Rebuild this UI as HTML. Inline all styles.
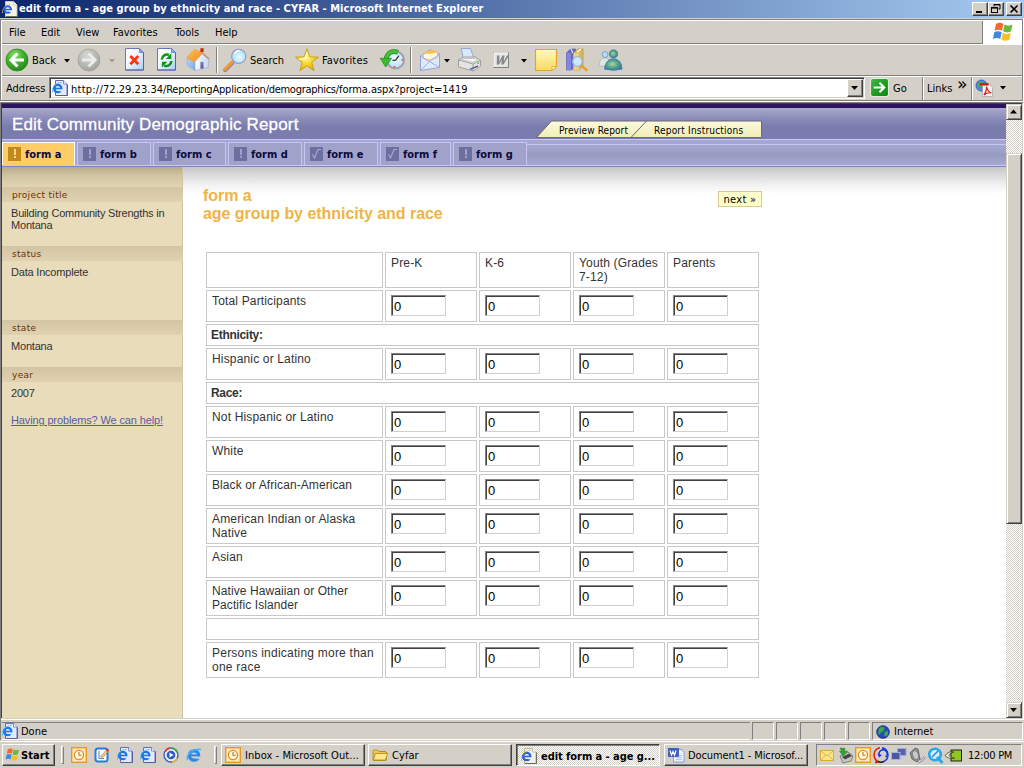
<!DOCTYPE html>
<html>
<head>
<meta charset="utf-8">
<title>edit form a - age group by ethnicity and race - CYFAR</title>
<style>
*{box-sizing:border-box;margin:0;padding:0}
html,body{width:1024px;height:768px;overflow:hidden;background:#d4d0c8}
body{position:relative;font-family:"DejaVu Sans Condensed","DejaVu Sans","Liberation Sans",sans-serif;font-size:11px;color:#000}
.abs{position:absolute}
.ui{position:absolute;white-space:nowrap;line-height:13px;font-size:11px}
/* title bar */
#title{left:0;top:0;width:1024px;height:18px;background:linear-gradient(90deg,#0a246a,#a6caf0)}
#title .t{left:19px;top:2px;color:#fff;font-weight:bold;font-size:11px;line-height:14px;letter-spacing:.05px}
.wb{position:absolute;top:2px;width:16px;height:14px;background:#d4d0c8;border:1px solid;border-color:#fff #404040 #404040 #fff;box-shadow:inset -1px -1px 0 #808080}
/* chrome lines */
.hl{position:absolute;height:1px;left:0;width:1024px}
.vl{position:absolute;width:1px}
/* page */
#page{left:2px;top:104px;width:1004px;height:614px;background:#fff;overflow:hidden}
#hdr{left:0;top:4px;width:1004px;height:31px;background:linear-gradient(180deg,#a9aacb 0%,#8e90bb 30%,#797cad 60%,#797cad 100%)}
#hdr .h{left:10px;top:7px;letter-spacing:.15px;-webkit-text-stroke:.3px #fff;font-family:"Liberation Sans",sans-serif;font-size:17px;line-height:20px;color:#fff;white-space:nowrap}
#tabs{left:0;top:35px;width:1004px;height:28px;background:#a5a6d2;border-top:1px solid #c8c8fa;border-bottom:1px solid #8283ba;box-shadow:inset 0 -1px 0 #c8c8fa}
.tab{position:absolute;top:2px;height:23px;border:1px solid #c6c6f6;border-bottom:none;background:#a0a2c9;font-weight:bold;font-size:11px;color:#0a0a3c;line-height:13px;white-space:nowrap}
.tab.on{background:#ffcc66;border-color:#fff}
.tab i{position:absolute;left:5px;top:4px;width:13px;height:14px;background:#6d709f}.tab i u{position:absolute;left:6px;top:2px;width:2px;height:6px;background:#a09fd0}.tab i s{position:absolute;left:6px;top:9px;width:2px;height:2px;background:#a09fd0}.tab.on i u,.tab.on i s{background:#ffd680}.tab i svg{position:absolute;left:0;top:0;stroke:#a8a8dc}
.tab.on i{background:#c28a1e}
.tab span{position:absolute;left:22px;top:5px}
#side{left:0;top:63px;width:181px;height:551px;background:#e9dcbb}
.sl{position:absolute;left:0;width:181px;height:15px;background:linear-gradient(180deg,#d3c5a3,#e0d2b0);color:#6e3302;font-family:"DejaVu Sans","Liberation Sans",sans-serif;font-size:9px;letter-spacing:.3px;line-height:13px;padding:2px 0 0 10px;white-space:nowrap}
.sv{position:absolute;left:9px;font-family:"Liberation Sans",sans-serif;font-size:11px;line-height:12px;color:#333;white-space:nowrap;letter-spacing:-.2px}
#main{left:181px;top:63px;width:823px;height:551px;background:#fff}
table.g{position:absolute;left:21px;top:83px;border-collapse:separate;border-spacing:2px;font-family:"Liberation Sans",sans-serif;font-size:12px;color:#333;table-layout:fixed}
table.g td{border:1px solid #c8c8c8;vertical-align:top;padding:3px 0 0 5px;line-height:14px;overflow:hidden;letter-spacing:.16px;white-space:nowrap}table.g td.sec{padding-left:4px}table.g td.sec b{letter-spacing:-.3px}table.g td.ic{padding-top:4px;letter-spacing:0}
.in{display:block;width:55px;height:21px;border:1px solid;border-color:#848284 #d4d0c8 #d4d0c8 #848284;box-shadow:inset 1px 1px 0 #424142;padding:2px 0 0 2px!important;background:#fff;font-size:13px;line-height:17px;color:#000;padding:1px 0 0 1px;margin:0}
/* taskbar */
.tbtn{position:absolute;top:744px;height:22px;background:#d4d0c8;border:1px solid;border-color:#fff #404040 #404040 #fff;box-shadow:inset -1px -1px 0 #808080;font-size:11px;line-height:13px;white-space:nowrap;overflow:hidden}
.sbb{width:16px;height:16px;background:#d4d0c8;border:1px solid;border-color:#d4d0c8 #404040 #404040 #d4d0c8;box-shadow:inset 1px 1px 0 #fff,inset -1px -1px 0 #808080}
.sp{position:absolute;top:722px;height:18px;border:1px solid;border-color:#808080 #fff #fff #808080}
.grip{position:absolute;top:746px;width:3px;height:18px;border:1px solid;border-color:#fff #808080 #808080 #fff}
.tbtn.dn{border-color:#404040 #fff #fff #404040;box-shadow:inset 1px 1px 0 #808080;background:#eae8e3;background-image:conic-gradient(#fff 25%,#d4d0c8 0 50%,#fff 0 75%,#d4d0c8 0);background-size:2px 2px}
</style>
</head>
<body>
<!-- TITLE BAR -->
<div id="title" class="abs">
 <svg class="abs" style="left:2px;top:1px" width="17" height="16" viewBox="0 0 17 16"><path d="M3.500 .500h8l3.500 3.500v11.500h-11.500z" fill="#f3f2e6" stroke="#c8c4b0" stroke-width="1"/><path d="M11.500 .500v3.500h3.500" fill="#fff" stroke="#c8c4b0" stroke-width=".8"/><path d="M15.500 4.500v11h-11.500" fill="none" stroke="#6e6a5c" stroke-width="1"/><circle cx="5.700" cy="8.500" r="3.300" fill="none" stroke="#2a62e0" stroke-width="2"/><rect x="2.800" y="7.800" width="6.400" height="1.500" fill="#2a62e0"/><rect x="7" y="9.300" width="3.500" height="1.700" fill="#f3f2e6"/><path d="M.500 12C0 7 4 3.500 8.500 3" fill="none" stroke="#d8b848" stroke-width="1" stroke-dasharray="1.500 .8"/></svg>
 <div class="ui t">edit form a - age group by ethnicity and race - CYFAR - Microsoft Internet Explorer</div>
 <div class="wb" style="left:972px"><svg class="abs" style="left:0;top:0" width="14" height="12"><rect x="3" y="8" width="6" height="2" fill="#000"/></svg></div>
 <div class="wb" style="left:988px"><svg class="abs" style="left:0;top:0" width="14" height="12"><path d="M5 1.5h6v4.5h-1.5M5 1.5v2" fill="none" stroke="#000"/><rect x="5" y="1" width="6" height="1.4" fill="#000"/><rect x="2.5" y="4.5" width="6" height="5" fill="#d4d0c8" stroke="#000"/><rect x="2" y="4" width="7" height="1.6" fill="#000"/></svg></div>
 <div class="wb" style="left:1006px"><svg class="abs" style="left:0;top:0" width="14" height="12"><path d="M3.5 2.5l7 7M10.5 2.5l-7 7" stroke="#000" stroke-width="1.7" fill="none"/></svg></div>
</div>
<!-- chrome lines -->
<div class="hl" style="top:19px;left:0;width:1023px;background:#808080"></div>
<div class="hl" style="top:20px;left:1px;width:1021px;background:#fff"></div>
<div class="vl" style="left:0;top:19px;height:722px;background:#808080"></div>
<div class="vl" style="left:1px;top:20px;height:80px;background:#fff"></div>
<div class="vl" style="left:1022px;top:19px;height:82px;background:#808080"></div>
<div class="vl" style="left:1023px;top:18px;height:702px;background:#fff"></div>
<div class="hl" style="top:43px;left:2px;width:980px;background:#808080"></div>
<div class="hl" style="top:44px;left:2px;width:1020px;background:#fff"></div>
<div class="hl" style="top:75px;left:2px;width:1020px;background:#808080"></div>
<div class="hl" style="top:76px;left:2px;width:1020px;background:#fff"></div>
<div class="hl" style="top:100px;left:0;width:1023px;background:#808080"></div>
<div class="hl" style="top:101px;left:0;width:1024px;background:#fff"></div>
<div class="hl" style="top:102px;left:0;width:1023px;background:#808080"></div>
<div class="hl" style="top:103px;left:1px;width:1021px;background:#404040"></div>
<div class="vl" style="left:1px;top:103px;height:615px;background:#404040"></div>
<div class="vl" style="left:1022px;top:103px;height:616px;background:#d4d0c8"></div>
<!-- MENU -->
<div class="ui" style="left:9px;top:26px">File</div>
<div class="ui" style="left:41px;top:26px">Edit</div>
<div class="ui" style="left:76px;top:26px">View</div>
<div class="ui" style="left:113px;top:26px">Favorites</div>
<div class="ui" style="left:175px;top:26px">Tools</div>
<div class="ui" style="left:215px;top:26px">Help</div>
<!-- windows flag -->
<div class="abs" style="left:983px;top:21px;width:39px;height:23px;background:#fff"></div>
<div class="vl" style="left:982px;top:21px;height:23px;background:#808080"></div>
<svg class="abs" style="left:992px;top:21px" width="25" height="23" viewBox="0 0 22 20"><path d="M3.5 2.5q3.5-2 6.5 0l-1.2 6q-3-2-6.5 0z" fill="#f26a2a"/><path d="M11 3q3.5 2 7 0l-1.2 6q-3.5 2-7 0z" fill="#6cb83a"/><path d="M2 9.8q3.500-2 6.500 0l-1.200 6q-3-2-6.500 0z" fill="#3f8ae0"/><path d="M9.500 10.300q3.500 2 7 0l-1.200 6q-3.500 2-7 0z" fill="#f6c020"/></svg>
<!-- TOOLBAR -->
<svg class="abs" style="left:4px;top:47px" width="630" height="26" viewBox="4 47 630 26">
<defs>
<radialGradient id="gG" cx=".4" cy=".3" r=".8"><stop offset="0" stop-color="#8fe070"/><stop offset=".5" stop-color="#3db02a"/><stop offset="1" stop-color="#1e7a18"/></radialGradient>
<radialGradient id="gS" cx=".4" cy=".3" r=".8"><stop offset="0" stop-color="#d8d8d4"/><stop offset=".6" stop-color="#b4b4b0"/><stop offset="1" stop-color="#9a9a96"/></radialGradient>
<linearGradient id="pg" x1="0" y1="0" x2="1" y2="1"><stop offset="0" stop-color="#fff"/><stop offset=".45" stop-color="#f0f6ff"/><stop offset="1" stop-color="#a4ccf8"/></linearGradient>
<radialGradient id="lens" cx=".55" cy=".55" r=".6"><stop offset="0" stop-color="#e8fbff"/><stop offset=".6" stop-color="#c0e8fc"/><stop offset="1" stop-color="#a4d0f4"/></radialGradient>
<radialGradient id="star" cx=".45" cy=".4" r=".6"><stop offset="0" stop-color="#fff8a0"/><stop offset=".5" stop-color="#f8d830"/><stop offset="1" stop-color="#e0a808"/></radialGradient>
<radialGradient id="msn" cx=".45" cy=".45" r=".65"><stop offset="0" stop-color="#a8d8a0"/><stop offset=".55" stop-color="#4f9c84"/><stop offset="1" stop-color="#2f74a8"/></radialGradient><linearGradient id="hwl" x1="0" y1="0" x2="1" y2="1"><stop offset="0" stop-color="#b4d8fa"/><stop offset="1" stop-color="#78a8e4"/></linearGradient><linearGradient id="hwf" x1="0" y1="0" x2="1" y2="0"><stop offset="0" stop-color="#ffffff"/><stop offset="1" stop-color="#c4d4f4"/></linearGradient><linearGradient id="hrf" x1="0" y1="0" x2="1" y2="1"><stop offset="0" stop-color="#ffc050"/><stop offset="1" stop-color="#f08c20"/></linearGradient><linearGradient id="hdr" x1="0" y1="0" x2="0" y2="1"><stop offset="0" stop-color="#8080c0"/><stop offset="1" stop-color="#585898"/></linearGradient><radialGradient id="clk" cx=".5" cy=".4" r=".7"><stop offset="0" stop-color="#f0fbff"/><stop offset="1" stop-color="#acd8f4"/></radialGradient><linearGradient id="note" x1="0" y1="0" x2="0" y2="1"><stop offset="0" stop-color="#fffbc0"/><stop offset="1" stop-color="#f8d860"/></linearGradient>
</defs>
<!-- back -->
<circle cx="17" cy="60" r="11" fill="url(#gG)" stroke="#2a8a20" stroke-width=".8"/>
<path d="M17.500 53.500l-6.500 6.500 6.500 6.500M11.500 60h12.500" fill="none" stroke="#fff" stroke-width="3"/>
<path d="M64 59h6l-3 3.500z" fill="#000"/>
<!-- forward -->
<circle cx="89" cy="60" r="11" fill="url(#gS)" stroke="#a0a09c" stroke-width=".8"/>
<path d="M88.500 53.500l6.500 6.500-6.500 6.500M94.500 60h-12.500" fill="none" stroke="#ecece8" stroke-width="3"/>
<path d="M109 59h6l-3 3.500z" fill="#a09c94"/>
<!-- stop -->
<path d="M125.500 48.500h14l4 4v17.500h-18z" fill="url(#pg)" stroke="#6878c0"/>
<path d="M143.500 52.500v17.500h-18" fill="none" stroke="#5560a4"/>
<path d="M139.500 48.500v4h4z" fill="#6ab4f8" stroke="#6878c0" stroke-width=".8"/>
<path d="M130.300 56l8 8.300M138.300 56l-8 8.300" stroke="#ff3408" stroke-width="2.800"/>
<!-- refresh -->
<path d="M157.500 48.500h14l4 4v17.500h-18z" fill="url(#pg)" stroke="#6878c0"/>
<path d="M175.500 52.500v17.500h-18" fill="none" stroke="#5560a4"/>
<path d="M171.500 48.500v4h4z" fill="#6ab4f8" stroke="#6878c0" stroke-width=".8"/>
<path d="M161.800 59.600A5.200 5.200 0 0 1 169 55" fill="none" stroke="#109414" stroke-width="2.500"/><path d="M171.300 53.200v5.700h-5.400z" fill="#109414"/>
<path d="M171.400 61A5.200 5.200 0 0 1 164.200 65.600" fill="none" stroke="#109414" stroke-width="2.500"/><path d="M161.900 67.400v-5.700h5.400z" fill="#109414"/>
<!-- home -->
<path d="M187 58v7.300l8.100 5.200v-9z" fill="url(#hwl)" stroke="#7aa0d8" stroke-width=".5"/>
<path d="M195.100 61.500l7.100-7.800 6.600 5.400-.3 8.100-13.400 3.300z" fill="url(#hwf)" stroke="#9aa4d4" stroke-width=".6"/>
<path d="M186.600 57.600l7.900-8.400 8.300 3.200-8.600 9.600z" fill="url(#hrf)" stroke="#f0a030" stroke-width=".5"/>
<path d="M202.200 53l6.900 6" stroke="#c88868" stroke-width="1.100" fill="none"/>
<rect x="200.400" y="48.200" width="3.200" height="3.900" fill="#c03010"/>
<rect x="200.400" y="61.800" width="3.200" height="6.800" fill="url(#hdr)"/>
<!-- sep -->
<rect x="216" y="47" width="1" height="26" fill="#808080"/><rect x="217" y="47" width="1" height="26" fill="#fff"/>
<!-- search -->
<path d="M225.200 70.200l7.200-7.400" stroke="#8a86b4" stroke-width="4" stroke-linecap="round"/>
<path d="M225 69.400l7.200-7.400" stroke="#f0982c" stroke-width="3" stroke-linecap="round"/>
<circle cx="238.700" cy="56.300" r="7.100" fill="url(#lens)" stroke="#8f92d2" stroke-width="1.100"/>
<path d="M234.500 53.500q1.500-2.500 4.500-3" stroke="#fff" stroke-width="1.300" fill="none" stroke-linecap="round"/>
<!-- star -->
<path d="M307.00 48.70 L309.94 56.85 L318.60 57.13 L311.76 62.45 L314.17 70.77 L307.00 65.90 L299.83 70.77 L302.24 62.45 L295.40 57.13 L304.06 56.85z" fill="url(#star)" stroke="#c8a010" stroke-width=".9" stroke-linejoin="round"/>
<path d="M307 52.500l-1.800 6-5.500 .8" fill="none" stroke="#fffbd0" stroke-width="1.200" stroke-linecap="round"/>
<!-- history -->
<circle cx="395.500" cy="60" r="8.600" fill="url(#clk)" stroke="#9c9cb0" stroke-width="2"/>
<circle cx="395.500" cy="60" r="9.700" fill="none" stroke="#c4c4d0" stroke-width=".7"/>
<path d="M395.500 60.300l3.400-4.600M395.500 60.300h-3" stroke="#303040" stroke-width="1.300"/>
<circle cx="402.300" cy="59.800" r=".9" fill="#e84020"/><circle cx="394.500" cy="66.800" r=".9" fill="#e84020"/>
<path d="M398 52.300q-9.500-3-12 6.500" fill="none" stroke="#188818" stroke-width="4.600"/>
<path d="M398 52.300q-9.500-3-12 6.500" fill="none" stroke="#48c038" stroke-width="3.200"/>
<path d="M380.200 58.300h11.300l-5.800 8.700z" fill="#40b830" stroke="#188818" stroke-width=".7"/>
<!-- sep -->
<rect x="410" y="47" width="1" height="26" fill="#808080"/><rect x="411" y="47" width="1" height="26" fill="#fff"/>
<!-- mail -->
<path d="M420.500 56l9.500-6.500 9.500 4.500v13.500l-19 3z" fill="#dcebfb" stroke="#98a0dc" stroke-width="1"/>
<path d="M423.500 54.500l8-4.500 6 2.500v5l-8 2.500-6-1.500z" fill="#fdf6e0" stroke="#e8b048" stroke-width=".7"/>
<path d="M423.500 53l8-3.500 6 2.500-7 2z" fill="#f8c050"/>
<path d="M420.500 56l9 5.500 10-7.500M420.500 70.500l9-9M439.500 67.500l-10-6" fill="none" stroke="#98a0dc" stroke-width=".9"/>
<path d="M444 59h6l-3 3.500z" fill="#000"/>
<!-- print -->
<path d="M461 48.500h9.500l3.500 10h-10.500z" fill="#d8e8fc" stroke="#8898d8" stroke-width=".8"/>
<path d="M458.500 60l5-3h12l5 3.500v5.500l-7 5-15-4z" fill="#e4e4e0" stroke="#909090" stroke-width=".8"/>
<path d="M458.500 60l14.500 4 7.500-3.500M473 64v7" fill="none" stroke="#909090" stroke-width=".8"/>
<path d="M464 58.500h11l2.500 2-5 1.800-10.500-2.600z" fill="#f4f4f0" stroke="#a0a0a0" stroke-width=".5"/>
<path d="M470 68.500l8-3.200v1.600l-8 3.200z" fill="#5060a0"/>
<rect x="477.500" y="62.500" width="1.500" height="1.500" fill="#40c030"/>
<!-- word -->
<rect x="493.500" y="52.500" width="15" height="15" fill="#e4e4e4" stroke="#a8a8a8"/>
<path d="M494 67v-14h14" fill="none" stroke="#fff" stroke-width="1"/><path d="M494 67.500h14.500v-14.500" fill="none" stroke="#808080" stroke-width="1"/>
<path d="M496 55.500h2.500l1 6 2-6h2l.5 6 2-6h2l-3.500 9h-2.300l-.5-5-1.700 5h-2.300z" fill="#888" transform="translate(501 60) skewX(-12) translate(-501 -60)"/>
<path d="M521 59h6l-3 3.500z" fill="#000"/>
<!-- note -->
<path d="M535.500 49.500h21v17l-4.500 4h-16.500z" fill="url(#note)" stroke="#e0a820" stroke-width="1.200"/>
<path d="M556.500 66.500h-4.500v4z" fill="#fff8d0" stroke="#e0a820" stroke-width=".8"/>
<!-- research -->
<path d="M566.500 53l4-4h5v17l-4 4h-5z" fill="#6868c8" stroke="#4848a0" stroke-width=".6"/>
<path d="M566.500 53h4.500v17h-4.500z" fill="#8484dc"/>
<path d="M570.500 49l1 .2 1 3.800" stroke="#fff" stroke-width="1" fill="none"/>
<path d="M573.500 53l4-4h5.500v17l-4 4h-5.500z" fill="#d8b860" stroke="#a88830" stroke-width=".6"/>
<path d="M573.500 53h5.500v17h-5.500z" fill="#ecd080"/>
<path d="M577 52l4-3" stroke="#fff" stroke-width="1.200"/>
<path d="M580.500 65l6 5" stroke="#e8a020" stroke-width="2.600" stroke-linecap="round"/>
<circle cx="577.500" cy="61.500" r="4.800" fill="#cfe6f8" stroke="#98b8d8" stroke-width="1.300"/>
<!-- messenger -->
<circle cx="605" cy="54.500" r="3" fill="#b8d8f0" stroke="#5890d0" stroke-width=".7"/>
<path d="M599 66q0-8 6-8t6 8z" fill="#dce8d8" stroke="#88a8c8" stroke-width=".6"/>
<circle cx="613.500" cy="54" r="4.200" fill="url(#msn)" stroke="#2a7090" stroke-width=".6"/>
<path d="M604.500 69q1-10 9-10t8.500 10q-8.500 2.500-17.500 0z" fill="url(#msn)" stroke="#3878b8" stroke-width=".9"/>
</svg>
<div class="ui" style="left:32px;top:54px">Back</div>
<div class="ui" style="left:250px;top:54px">Search</div>
<div class="ui" style="left:322px;top:54px;letter-spacing:.15px">Favorites</div>
<!-- ADDRESS -->
<div class="ui" style="left:6px;top:82px">Address</div>
<div class="abs" style="left:49px;top:77px;width:816px;height:22px;background:#fff;border:1px solid;border-color:#808080 #fff #fff #808080;box-shadow:inset 1px 1px 0 #404040,inset -1px -1px 0 #d4d0c8"></div>
<svg class="abs" style="left:52px;top:80px" width="17" height="16" viewBox="0 0 17 16"><path d="M3.500 .500h8l3.500 3.500v11.500h-11.500z" fill="#e4eafd" stroke="#6a6cba" stroke-width="1"/><path d="M11.500 .500v3.500h3.500" fill="#fff" stroke="#6a6cba" stroke-width=".8"/><path d="M15.500 4.500v11h-11.500" fill="none" stroke="#5c5c9c" stroke-width="1"/><circle cx="5.700" cy="8.500" r="3.700" fill="none" stroke="#1c78e0" stroke-width="2.200"/><rect x="2.500" y="7.700" width="7" height="1.600" fill="#1c78e0"/><rect x="7.200" y="9.400" width="3.800" height="1.900" fill="#e4eafd"/><path d="M.500 12.500C-.500 7 4 2.500 9.500 2.500" fill="none" stroke="#5cb8f2" stroke-width="1" stroke-dasharray="2 .7"/></svg>
<div class="ui" style="left:71px;top:83px"><span style="letter-spacing:.24px">http://</span><span style="letter-spacing:.02px">72.29.23.34</span><span style="letter-spacing:-.195px">/ReportingApplication</span><span style="letter-spacing:-.28px">/demographics</span><span style="letter-spacing:-.05px">/forma.aspx</span><span style="letter-spacing:.03px">?project=1419</span></div>
<!-- combo btn -->
<div class="abs" style="left:847px;top:79px;width:16px;height:18px;background:#d4d0c8;border:1px solid;border-color:#fff #404040 #404040 #fff;box-shadow:inset -1px -1px 0 #808080"></div>
<svg class="abs" style="left:851px;top:86px" width="8" height="5"><path d="M0 0h7l-3.500 4z" fill="#000"/></svg>
<!-- go -->
<svg class="abs" style="left:870px;top:78px" width="19" height="19" viewBox="0 0 18 18"><defs><linearGradient id="gog" x1="0" y1="0" x2="1" y2="1"><stop offset="0" stop-color="#4cb84c"/><stop offset=".5" stop-color="#1f9e22"/><stop offset="1" stop-color="#0e8a12"/></linearGradient></defs><rect x=".5" y=".5" width="17" height="17" rx="2" fill="url(#gog)" stroke="#e4efe0"/><path d="M3.500 9h9M9 4.500l4.500 4.500-4.500 4.500" fill="none" stroke="#fff" stroke-width="2"/></svg>
<div class="ui" style="left:893px;top:82px">Go</div>
<div class="vl" style="left:922px;top:77px;height:23px;background:#808080"></div><div class="vl" style="left:923px;top:77px;height:23px;background:#fff"></div>
<div class="ui" style="left:927px;top:82px">Links</div>
<div class="ui" style="left:957px;top:75px;font-size:17px;line-height:18px;letter-spacing:0;font-family:'DejaVu Sans',sans-serif">»</div>
<div class="vl" style="left:971px;top:77px;height:23px;background:#808080"></div><div class="vl" style="left:972px;top:77px;height:23px;background:#fff"></div>
<svg class="abs" style="left:975px;top:79px" width="20" height="18" viewBox="0 0 20 18"><circle cx="6.500" cy="6.500" r="5.500" fill="#4a88e0" stroke="#2858b0" stroke-width=".8"/><path d="M3 4q3-2 6 0v3q-3 2-6 0z" fill="#58b048"/><path d="M7.500 5.500h7l3 3v9h-10z" fill="#f4f4f4" stroke="#a0a0a0" stroke-width=".7"/><rect x="4.500" y="4" width="9" height="2.600" fill="#e01818"/><path d="M9 16q3-5 2.500-8.500 1 5 5 6.500-4-1-7.500 2z" fill="none" stroke="#e01818" stroke-width="1.200"/></svg>
<svg class="abs" style="left:1000px;top:86px" width="8" height="5"><path d="M0 0h6l-3 3.500z" fill="#000"/></svg>
<!-- PAGE -->
<div id="page" class="abs">
 <div class="abs" style="left:0;top:0;width:1004px;height:4px;background:#2b1560"></div>
 <div id="hdr" class="abs"><div class="abs h">Edit Community Demographic Report</div></div>
 <svg class="abs" style="left:530px;top:14px" width="232" height="22" viewBox="532 118 232 22"><defs><linearGradient id="pvg" x1="0" y1="0" x2="0" y2="1"><stop offset="0" stop-color="#fbf9dc"/><stop offset="1" stop-color="#f1eeb4"/></linearGradient></defs><path d="M536.500 137.500l15-16.500h210v16.500z" fill="url(#pvg)" stroke="#6a6a78" stroke-width="1"/><path d="M631 137.500l15.500-16.500" stroke="#6a6a78" stroke-width="1"/></svg>
<div class="ui" style="left:557px;top:20px;font-size:10px;letter-spacing:.1px">Preview Report</div>
<div class="ui" style="left:652px;top:20px;font-size:10px;letter-spacing:.2px">Report Instructions</div>
<div id="tabs" class="abs">
<div class="abs" style="left:525px;top:4px;width:479px;height:21px;border-top:1px solid #c6c6f6;background:linear-gradient(180deg,#a6a8d2,#979ac0 50%,#a7a9d5)"></div>
<div class="tab on" style="left:0px;width:73px"><i><u></u><s></s></i><span>form a</span></div>
<div class="tab" style="left:75px;width:74px"><i><u></u><s></s></i><span>form b</span></div>
<div class="tab" style="left:151px;width:73px"><i><u></u><s></s></i><span>form c</span></div>
<div class="tab" style="left:226px;width:74px"><i><u></u><s></s></i><span>form d</span></div>
<div class="tab" style="left:302px;width:74px"><i><svg width="13" height="14"><path d="M2.500 7.500l2 3.500 3.500-8.500h3" fill="none" stroke-width="1.200"/></svg></i><span>form e</span></div>
<div class="tab" style="left:378px;width:71px"><i><svg width="13" height="14"><path d="M2.500 7.500l2 3.500 3.500-8.500h3" fill="none" stroke-width="1.200"/></svg></i><span>form f</span></div>
<div class="tab" style="left:451px;width:74px"><i><u></u><s></s></i><span>form g</span></div>
</div>
<div id="side" class="abs">
<div class="abs" style="left:0;top:0;width:181px;height:20px;background:linear-gradient(180deg,#b5a989,#cfc3a1 40%,#e2d5b3)"></div>
<div class="abs" style="left:180px;top:0;width:1px;height:551px;background:#cbc2a8"></div>
<div class="sl" style="top:20px">project title</div>
<div class="sv" style="top:40px">Building Community Strengths in<br>Montana</div>
<div class="sl" style="top:79px">status</div>
<div class="sv" style="top:99px">Data Incomplete</div>
<div class="sl" style="top:153px">state</div>
<div class="sv" style="top:173px">Montana</div>
<div class="sl" style="top:200px">year</div>
<div class="sv" style="top:220px">2007</div>
<div class="sv" style="top:247px;color:#5a5aa8;text-decoration:underline;letter-spacing:-.13px">Having problems? We can help!</div>
</div>
 <div id="main" class="abs">
<div class="abs" style="left:0;top:0;width:823px;height:27px;background:linear-gradient(180deg,#c6c6c6 0%,#dadada 30%,#efefef 62%,#fff 100%)"></div>
<div class="abs" style="left:20px;top:20px;font-family:'Liberation Sans',sans-serif;font-weight:bold;font-size:16px;line-height:18px;color:#f0b445;white-space:nowrap;letter-spacing:-.04px">form a<br>age group by ethnicity and race</div>
<div class="abs nx" style="left:535px;top:24px;width:44px;height:16px;background:#ffffcc;border:1px solid #d2ca92;font-size:11px;line-height:15px;text-align:center;white-space:nowrap;letter-spacing:.3px">next »</div>
<table class="g"><colgroup><col style="width:177px"><col style="width:92px"><col style="width:92px"><col style="width:92px"><col style="width:92px"></colgroup>
<tr style="height:36px"><td></td><td>Pre-K</td><td>K-6</td><td>Youth (Grades<br>7-12)</td><td>Parents</td></tr>
<tr style="height:32px"><td>Total Participants</td><td class="ic"><span class="in">0</span></td><td class="ic"><span class="in">0</span></td><td class="ic"><span class="in">0</span></td><td class="ic"><span class="in">0</span></td></tr>
<tr style="height:22px"><td colspan="5" class="sec"><b>Ethnicity:</b></td></tr>
<tr style="height:32px"><td>Hispanic or Latino</td><td class="ic"><span class="in">0</span></td><td class="ic"><span class="in">0</span></td><td class="ic"><span class="in">0</span></td><td class="ic"><span class="in">0</span></td></tr>
<tr style="height:22px"><td colspan="5" class="sec"><b>Race:</b></td></tr>
<tr style="height:32px"><td>Not Hispanic or Latino</td><td class="ic"><span class="in">0</span></td><td class="ic"><span class="in">0</span></td><td class="ic"><span class="in">0</span></td><td class="ic"><span class="in">0</span></td></tr>
<tr style="height:32px"><td>White</td><td class="ic"><span class="in">0</span></td><td class="ic"><span class="in">0</span></td><td class="ic"><span class="in">0</span></td><td class="ic"><span class="in">0</span></td></tr>
<tr style="height:32px"><td style="letter-spacing:.08px">Black or African-American</td><td class="ic"><span class="in">0</span></td><td class="ic"><span class="in">0</span></td><td class="ic"><span class="in">0</span></td><td class="ic"><span class="in">0</span></td></tr>
<tr style="height:36px"><td>American Indian or Alaska<br>Native</td><td class="ic"><span class="in">0</span></td><td class="ic"><span class="in">0</span></td><td class="ic"><span class="in">0</span></td><td class="ic"><span class="in">0</span></td></tr>
<tr style="height:32px"><td>Asian</td><td class="ic"><span class="in">0</span></td><td class="ic"><span class="in">0</span></td><td class="ic"><span class="in">0</span></td><td class="ic"><span class="in">0</span></td></tr>
<tr style="height:36px"><td style="letter-spacing:.085px">Native Hawaiian or Other<br>Pactific Islander</td><td class="ic"><span class="in">0</span></td><td class="ic"><span class="in">0</span></td><td class="ic"><span class="in">0</span></td><td class="ic"><span class="in">0</span></td></tr>
<tr style="height:22px"><td colspan="5" class="sec"><b></b></td></tr>
<tr style="height:36px"><td style="letter-spacing:.23px">Persons indicating more than<br>one race</td><td class="ic"><span class="in">0</span></td><td class="ic"><span class="in">0</span></td><td class="ic"><span class="in">0</span></td><td class="ic"><span class="in">0</span></td></tr>
</table>
</div>
</div>
<!-- SCROLLBAR -->
<div class="abs" style="left:1006px;top:104px;width:16px;height:614px;background:#eae8e3;background-image:conic-gradient(#fff 25%,#d4d0c8 0 50%,#fff 0 75%,#d4d0c8 0);background-size:2px 2px"></div>
<div class="abs sbb" style="left:1006px;top:104px"><svg class="abs" style="left:3px;top:4px" width="8" height="5"><path d="M0 4.500h7l-3.500-4z" fill="#000"/></svg></div>
<div class="abs sbb" style="left:1006px;top:702px"><svg class="abs" style="left:3px;top:5px" width="8" height="5"><path d="M0 0h7l-3.500 4z" fill="#000"/></svg></div>
<div class="abs sbb" style="left:1006px;top:153px;height:371px"></div>
<!-- STATUS -->
<div class="hl" style="top:719px;left:1px;width:1023px;background:#fff"></div>
<div class="hl" style="top:722px;left:2px;width:748px;background:#808080"></div>
<div class="hl" style="top:739px;left:2px;width:748px;background:#fff"></div>
<svg class="abs" style="left:2px;top:723px" width="17" height="16" viewBox="0 0 17 16"><path d="M3.500 .500h8l3.500 3.500v11.500h-11.500z" fill="#e4eafd" stroke="#6a6cba" stroke-width="1"/><path d="M11.500 .500v3.500h3.500" fill="#fff" stroke="#6a6cba" stroke-width=".8"/><path d="M15.500 4.500v11h-11.500" fill="none" stroke="#5c5c9c" stroke-width="1"/><circle cx="5.700" cy="8.500" r="3.700" fill="none" stroke="#1c78e0" stroke-width="2.200"/><rect x="2.500" y="7.700" width="7" height="1.600" fill="#1c78e0"/><rect x="7.200" y="9.400" width="3.800" height="1.900" fill="#e4eafd"/><path d="M.500 12.500C-.500 7 4 2.500 9.500 2.500" fill="none" stroke="#5cb8f2" stroke-width="1" stroke-dasharray="2 .7"/></svg>
<div class="ui" style="left:21px;top:725px">Done</div>
<div class="sp" style="left:752px;width:22px"></div><div class="sp" style="left:776px;width:22px"></div><div class="sp" style="left:800px;width:22px"></div><div class="sp" style="left:824px;width:22px"></div><div class="sp" style="left:848px;width:22px"></div><div class="sp" style="left:872px;width:151px"></div>
<svg class="abs" style="left:876px;top:725px" width="14" height="14" viewBox="0 0 14 14"><circle cx="7" cy="7" r="6.300" fill="#2848c8" stroke="#182868" stroke-width=".8"/><path d="M3 3.500q3-2.500 5.500-.5l-1 3-2.500 1.500-2 2.500q-1.500-3.500 0-6.500zM8.500 7l3.500-1q.8 3-1.500 5.500l-2-.5z" fill="#38b038"/></svg>
<div class="ui" style="left:894px;top:725px">Internet</div>
<!-- TASKBAR -->
<div class="hl" style="top:740px;left:0;width:1024px;background:#d4d0c8"></div>
<div class="hl" style="top:741px;left:0;width:1024px;background:#fff"></div>
<div class="abs" style="left:0;top:742px;width:1024px;height:26px;background:#d4d0c8"></div>
<div class="tbtn" style="left:2px;width:53px"><svg class="abs" style="left:2px;top:2px" width="17" height="16" viewBox="0 0 22 20"><path d="M3.500 2.500q3.500-2 6.500 0l-1.200 6q-3-2-6.500 0z" fill="#f26a2a"/><path d="M11 3q3.500 2 7 0l-1.200 6q-3.500 2-7 0z" fill="#6cb83a"/><path d="M2 9.800q3.500-2 6.500 0l-1.200 6q-3-2-6.500 0z" fill="#3f8ae0"/><path d="M9.500 10.300q3.500 2 7 0l-1.200 6q-3.500 2-7 0z" fill="#f6c020"/></svg><span class="abs" style="left:18px;top:4px;font-weight:bold;letter-spacing:.1px">Start</span></div>
<div class="grip" style="left:61px"></div>
<svg class="abs" style="left:71px;top:747px" width="16" height="16" viewBox="0 0 16 16"><rect x=".7" y=".7" width="14.600" height="14.600" fill="#fde9c0" stroke="#e8981c" stroke-width="1.400"/><circle cx="8" cy="8" r="4.600" fill="#fff6dc" stroke="#d89028" stroke-width="1.300"/><path d="M8 5v3.300h2.600" fill="none" stroke="#c07818" stroke-width="1.100"/></svg>
<svg class="abs" style="left:94px;top:747px" width="16" height="16" viewBox="0 0 16 16"><rect x="1.500" y="1.500" width="12" height="13" rx="2.500" fill="#fff" stroke="#2a78e0" stroke-width="2"/><path d="M5 4v7.500h5" fill="none" stroke="#7090c0" stroke-width="1.200"/><path d="M6.500 9.500l5.500-6 1.800 1.500-5.500 6z" fill="#f0d080" stroke="#806020" stroke-width=".5"/><circle cx="13.500" cy="3" r="1.300" fill="#e03818"/></svg>
<svg class="abs" style="left:117px;top:747px" width="17" height="16" viewBox="0 0 17 16"><path d="M3.500 .500h8l3.500 3.500v11.500h-11.500z" fill="#e4eafd" stroke="#6a6cba" stroke-width="1"/><path d="M11.500 .500v3.500h3.500" fill="#fff" stroke="#6a6cba" stroke-width=".8"/><path d="M15.500 4.500v11h-11.500" fill="none" stroke="#5c5c9c" stroke-width="1"/><circle cx="5.700" cy="8.500" r="3.700" fill="none" stroke="#1c78e0" stroke-width="2.200"/><rect x="2.500" y="7.700" width="7" height="1.600" fill="#1c78e0"/><rect x="7.200" y="9.400" width="3.800" height="1.900" fill="#e4eafd"/><path d="M.500 12.500C-.500 7 4 2.500 9.500 2.500" fill="none" stroke="#5cb8f2" stroke-width="1" stroke-dasharray="2 .7"/></svg>
<svg class="abs" style="left:140px;top:747px" width="17" height="16" viewBox="0 0 17 16"><path d="M3.500 .500h8l3.500 3.500v11.500h-11.500z" fill="#e4eafd" stroke="#6a6cba" stroke-width="1"/><path d="M11.500 .500v3.500h3.500" fill="#fff" stroke="#6a6cba" stroke-width=".8"/><path d="M15.500 4.500v11h-11.500" fill="none" stroke="#5c5c9c" stroke-width="1"/><circle cx="5.700" cy="8.500" r="3.700" fill="none" stroke="#1c78e0" stroke-width="2.200"/><rect x="2.500" y="7.700" width="7" height="1.600" fill="#1c78e0"/><rect x="7.200" y="9.400" width="3.800" height="1.900" fill="#e4eafd"/><path d="M.500 12.500C-.500 7 4 2.500 9.500 2.500" fill="none" stroke="#5cb8f2" stroke-width="1" stroke-dasharray="2 .7"/></svg>
<svg class="abs" style="left:163px;top:747px" width="16" height="16" viewBox="0 0 16 16"><circle cx="8" cy="8" r="7" fill="#e8ecf4" stroke="#4060b8" stroke-width="1.400"/><path d="M2 5a7 7 0 0 1 5-4" stroke="#e84020" stroke-width="1.600" fill="none"/><path d="M9.500 1.200a7 7 0 0 1 4.800 4.500" stroke="#40b030" stroke-width="1.600" fill="none"/><path d="M14 11a7 7 0 0 1-5 3.800" stroke="#f0c020" stroke-width="1.600" fill="none"/><circle cx="8" cy="8" r="4.300" fill="#3058c0"/><path d="M6.500 5.500l4.200 2.500-4.200 2.500z" fill="#fff"/></svg>
<svg class="abs" style="left:186px;top:747px" width="17" height="16" viewBox="0 0 17 16"><circle cx="8" cy="8.500" r="4.600" fill="none" stroke="#2a8ae8" stroke-width="3.400"/><rect x="4" y="7.400" width="9" height="2" fill="#2a8ae8"/><rect x="9.500" y="9.500" width="5" height="2.200" fill="#d4d0c8"/><path d="M1.500 13C-.5 8 7 1 15 2.500" fill="none" stroke="#48b0f0" stroke-width="1.300"/></svg>
<div class="grip" style="left:214px"></div>
<div class="tbtn" style="left:221px;width:144px"><svg class="abs" style="left:3px;top:2px" width="16" height="16" viewBox="0 0 16 16"><rect x=".7" y=".7" width="14.600" height="14.600" fill="#fde9c0" stroke="#e8981c" stroke-width="1.400"/><circle cx="8" cy="8" r="4.600" fill="#fff6dc" stroke="#d89028" stroke-width="1.300"/><path d="M8 5v3.300h2.600" fill="none" stroke="#c07818" stroke-width="1.100"/></svg><span class="abs" style="left:23px;top:4px;letter-spacing:.06px">Inbox - Microsoft Out...</span></div>
<div class="tbtn" style="left:368px;width:144px"><svg class="abs" style="left:3px;top:2px" width="16" height="16" viewBox="0 0 16 16"><path d="M1 4.500q0-1.500 1.500-1.500h3l1.500 1.500h6q1.500 0 1.500 1.500v6.500q0 1-1 1h-11.500q-1 0-1-1z" fill="#f0c848" stroke="#b08818" stroke-width=".9"/><path d="M1.500 13l2-6.500h12l-2 6.500z" fill="#fce890" stroke="#b08818" stroke-width=".8"/></svg><span class="abs" style="left:23px;top:4px;letter-spacing:.06px">Cyfar</span></div>
<div class="tbtn dn" style="left:516px;width:144px"><svg class="abs" style="left:4px;top:3px" width="17" height="16" viewBox="0 0 17 16"><path d="M3.500 .500h8l3.500 3.500v11.500h-11.500z" fill="#f3f2e6" stroke="#b8b4a0" stroke-width="1"/><path d="M11.500 .500v3.500h3.500" fill="#fff" stroke="#b8b4a0" stroke-width=".8"/><path d="M15.500 4.500v11h-11.500" fill="none" stroke="#6e6a5c" stroke-width="1"/><circle cx="5.700" cy="8.500" r="3.700" fill="none" stroke="#2a62e0" stroke-width="2.200"/><rect x="2.500" y="7.700" width="7" height="1.600" fill="#2a62e0"/><rect x="7.200" y="9.400" width="3.800" height="1.900" fill="#f3f2e6"/><path d="M.500 12.500C-.500 7 4 2.500 9.500 2.500" fill="none" stroke="#d8b848" stroke-width="1" stroke-dasharray="2 .7"/></svg><span class="abs" style="left:24px;top:5px;font-weight:bold;letter-spacing:-.05px">edit form a - age g...</span></div>
<div class="tbtn" style="left:664px;width:144px"><svg class="abs" style="left:3px;top:2px" width="17" height="16" viewBox="0 0 17 16"><path d="M5.500 2.500h8l2.500 2.500v10h-10.500z" fill="#e8f0fc" stroke="#7890d0" stroke-width=".8"/><path d="M8 8.500h6M8 10.500h6M8 12.500h6" stroke="#a8b8e0" stroke-width=".8"/><rect x=".5" y="1.500" width="10" height="8" fill="#3860c8" stroke="#2040a0" stroke-width=".6"/><path d="M2 3.500l1.500 4.500 1.500-3.500 1.500 3.500 1.500-4.500" fill="none" stroke="#fff" stroke-width="1.200"/></svg><span class="abs" style="left:23px;top:4px;letter-spacing:-.1px">Document1 - Microsof...</span></div>
<!-- tray -->
<div class="abs" style="left:816px;top:744px;width:206px;height:22px;border:1px solid;border-color:#808080 #fff #fff #808080"></div>
<svg class="abs" style="left:819px;top:746px" width="146" height="18" viewBox="819 746 146 18">
<path d="M820.500 750.500h13v10h-13z" fill="#fae48c" stroke="#d8a828" stroke-width=".9"/><path d="M820.500 750.500l6.500 5.500 6.500-5.500M820.500 760.500l5-5M833.500 760.500l-5-5" fill="none" stroke="#d8a828" stroke-width=".8"/>
<path d="M840 756l8-4 5 4-2 5-8 2z" fill="#c8c8c0" stroke="#606060" stroke-width=".7"/><path d="M842 757l7-3.500 3 2.500-7 3.500z" fill="#484848"/><path d="M840 748l5 .5-.5 3 3-.5-4.500 5-3.500-5 2.500.3z" fill="#30a830" stroke="#187018" stroke-width=".5"/>
<rect x="855.700" y="747.700" width="14.600" height="14.600" fill="#fde9c0" stroke="#e8981c" stroke-width="1.400"/><circle cx="863" cy="755" r="4.600" fill="#fff6dc" stroke="#d89028" stroke-width="1.300"/><path d="M863 752v3.300h2.600" fill="none" stroke="#c07818" stroke-width="1.100"/>
<path d="M880 747.800a7.200 7.200 0 0 0-2 13.500" fill="none" stroke="#e81818" stroke-width="1.500"/><path d="M875.500 759.500l3.500 3-4 1z" fill="#e81818"/><path d="M882 747.800a7.200 7.200 0 0 1 2 13.500" fill="none" stroke="#1838e0" stroke-width="1.500"/><path d="M878 761.500q3 1.500 6 0" fill="none" stroke="#101010" stroke-width="1.400"/><path d="M885.500 757a4 4 0 1 0-6-1.500" fill="none" stroke="#1838e0" stroke-width="1.500"/><path d="M877.500 753.500l1.500 4 3-2.500z" fill="#1838e0"/>
<rect x="897.500" y="748.500" width="8.500" height="7" fill="#5864a8" stroke="#a0a8d8" stroke-width="1"/><path d="M899 757.500h6" stroke="#c8c8d8" stroke-width="1.600"/><rect x="891.500" y="752.500" width="8.500" height="7" fill="#4c58a0" stroke="#a8b0e0" stroke-width="1"/><path d="M892.500 761.800h7" stroke="#d0d0e0" stroke-width="2"/>
<path d="M910 753l5-5 3 1 2 10-3 3-5-3z" fill="#909090" stroke="#505050" stroke-width=".7"/><ellipse cx="915.500" cy="755" rx="3" ry="4.500" fill="#c8c8c8" stroke="#606060" stroke-width=".6" transform="rotate(-15 915.500 755)"/><path d="M920 760q3-1 4-4M918 763q5-1 8-6" fill="none" stroke="#7880c8" stroke-width=".8"/>
<circle cx="935" cy="754.500" r="5.800" fill="#d8ecf8" stroke="#28a8e8" stroke-width="2.600"/><path d="M937 757l5.500 6" stroke="#28a8e8" stroke-width="2.800"/><path d="M932 757l6-6" stroke="#1890d8" stroke-width="1.400"/>
<rect x="951" y="750" width="10.500" height="11" fill="#90c820" stroke="#101010" stroke-width=".9"/><path d="M945 755.500q4-5 9-3.500-4 0-5 3.500 1.500 3 5.500 2.500-5 2-9.500-2.500z" fill="#e8f0d0" stroke="#283010" stroke-width=".7"/>
</svg>
<div class="ui" style="left:968px;top:749px;letter-spacing:-.25px">12:00 PM</div>
</body>
</html>
